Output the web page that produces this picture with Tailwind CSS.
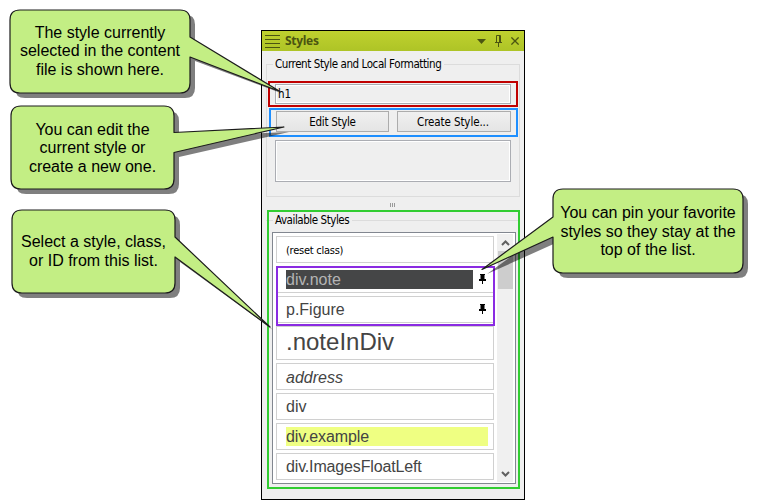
<!DOCTYPE html>
<html lang="en">
<head>
<meta charset="utf-8">
<title>Styles window pane</title>
<script src="https://cdn.jsdelivr.net/npm/@tailwindcss/browser@4"></script>
</head>
<body class="bg-white">
<div class="relative w-[758px] h-[500px] overflow-hidden pl-[261px] pt-[30px]">

  <!-- Styles pane -->
  <main class="w-[264px] h-[470px] border border-black bg-[#efefef] flex flex-col text-[11.5px] leading-[14px] text-black font-['DejaVu_Sans_Condensed','DejaVu_Sans',sans-serif]">
    <header class="h-[20px] shrink-0 flex items-center bg-linear-to-b from-[#bfd12f] to-[#aec426] pl-[3px] pr-[5px] text-[#4b5511]">
      <svg class="w-[15px] h-[13px]" viewBox="0 0 15 13" stroke="#4b5511" stroke-width="1"><path d="M0 .5h15M0 4.500h15M0 8.500h15M0 12.500h15"/></svg>
      <span class="ml-[5px] text-[12px] font-bold tracking-[-0.3px] font-['Open_Sans',sans-serif]">Styles</span>
      <svg class="ml-auto w-[9px] h-[5px]" viewBox="0 0 9 5" fill="#4b5511"><path d="M0 0h9L4.500 5z"/></svg>
      <svg class="ml-[9px] w-[7px] h-[12px]" viewBox="0 0 7 12" fill="none" stroke="#4b5511"><path d="M1.500 7V.5h4V7M4.500 .5V7M0 7.500h7M3.500 8v4"/></svg>
      <svg class="ml-[9px] w-[8px] h-[8px]" viewBox="0 0 8 8" fill="none" stroke="#4b5511" stroke-width="1.300"><path d="M.4 .4l7.200 7.200M7.600 .4L.4 7.600"/></svg>
    </header>

    <section class="mt-[6px] mx-[4px] h-[140px] shrink-0 flex flex-col">
      <div class="flex items-center h-[14px]">
        <span class="w-[7px] h-px bg-[#dcdcdc]"></span>
        <h2 class="pl-[2px] w-[171px] whitespace-nowrap tracking-[-0.42px]">Current Style and Local Formatting</h2>
        <span class="flex-1 h-px bg-[#dcdcdc]"></span>
      </div>
      <div class="-mt-[7px] h-[133px] border border-t-0 border-[#dcdcdc] px-[8px] pt-[20px] flex flex-col">
        <div class="h-[20px] border border-[#abadb3] ring-1 ring-inset ring-white pl-[2px] flex items-center">h1</div>
        <div class="mt-[7px] ml-px flex gap-[8px] w-[235px]">
          <button class="w-[113px] h-[21px] border border-[#acacac] bg-linear-to-b from-[#f0f0f0] to-[#e5e5e5] tracking-[-0.3px]">Edit Style</button>
          <button class="w-[114px] h-[21px] pr-[2px] border border-[#acacac] bg-linear-to-b from-[#f0f0f0] to-[#e5e5e5] tracking-[-0.1px]">Create Style...</button>
        </div>
        <div class="mt-[8px] h-[42px] border border-[#abadb3] ring-1 ring-inset ring-white"></div>
      </div>
    </section>

    <div class="h-[16px] shrink-0 flex justify-center items-center gap-px pr-[2px]"><i class="w-px h-[4px] bg-[#999]"></i><i class="w-px h-[4px] bg-[#999]"></i><i class="w-px h-[4px] bg-[#999]"></i></div>

    <section class="mx-[4px] h-[277px] shrink-0 flex flex-col">
      <div class="flex items-center h-[14px]">
        <span class="w-[7px] h-px bg-[#dcdcdc]"></span>
        <h2 class="pl-[2px] w-[79px] whitespace-nowrap tracking-[-0.45px]">Available Styles</h2>
        <span class="flex-1 h-px bg-[#dcdcdc]"></span>
      </div>
      <div class="mt-[5px] ml-[6px] w-[244px] h-[252px] border border-[#828790] bg-white flex">
        <ul class="pl-[3px] pt-[3px] w-[222px] flex flex-col gap-[3px] text-[16px] leading-[19px] text-[#444] font-['Liberation_Sans',sans-serif]">
          <li class="w-[218px] h-[27px] border border-[#d0d0d0] px-[9px] pt-px flex items-center text-[11px] text-black font-['DejaVu_Sans_Condensed',sans-serif] tracking-[-0.25px]">(reset class)</li>
          <li class="w-[218px] h-[27px] border border-[#d0d0d0] pl-[9px] pr-[6px] flex items-center"><span class="w-[187px] h-[19px] bg-[#454647] text-[#b4b4b4]">div.note</span>
            <svg class="ml-auto mb-[2px] w-[9px] h-[10px]" viewBox="0 0 9 10" fill="#000"><path d="M2 0h5v1H6.500v4H8v2H5v3H4V7H1V5h1.500V1H2z"/></svg></li>
          <li class="w-[218px] h-[27px] border border-[#d0d0d0] pl-[9px] pr-[6px] flex items-center"><span>p.Figure</span>
            <svg class="ml-auto mb-[2px] w-[9px] h-[10px]" viewBox="0 0 9 10" fill="#000"><path d="M2 0h5v1H6.500v4H8v2H5v3H4V7H1V5h1.500V1H2z"/></svg></li>
          <li class="w-[218px] h-[34px] border border-[#d0d0d0] px-[9px] text-[24px] leading-[30px]">.noteInDiv</li>
          <li class="w-[218px] h-[27px] border border-[#d0d0d0] px-[9px] pt-px flex items-center italic">address</li>
          <li class="w-[218px] h-[27px] border border-[#d0d0d0] px-[9px] flex items-center">div</li>
          <li class="w-[218px] h-[27px] border border-[#d0d0d0] px-[9px] flex items-center"><span class="w-[202px] shrink-0 h-[19px] bg-[#efff82] tracking-[-0.1px]">div.example</span></li>
          <li class="w-[218px] h-[27px] border border-[#d0d0d0] px-[9px] flex items-center tracking-[-0.15px]">div.ImagesFloatLeft</li>
        </ul>
        <div class="ml-[2px] my-px w-[16px] bg-[#f0f0f0] flex flex-col items-center">
          <svg class="h-[17px] w-[15px] shrink-0" viewBox="0 0 15 17" fill="none" stroke="#606060" stroke-width="2"><path d="M4 11l3.500-3.500L11 11"/></svg>
          <div class="w-[15px] h-[38px] bg-[#cdcdcd]"></div>
          <svg class="mt-auto h-[17px] w-[15px] shrink-0" viewBox="0 0 15 17" fill="none" stroke="#606060" stroke-width="2"><path d="M4 7l3.500 3.500L11 7"/></svg>
        </div>
      </div>
    </section>
  </main>

  <!-- Highlight frames over the pane -->
  <div class="absolute left-[268px] top-[81px] w-[250px] h-[26px] border-2 border-[#c00000]"></div>
  <div class="absolute left-[269px] top-[108px] w-[249px] h-[29px] border-2 border-[#1e8fff]"></div>
  <div class="absolute left-[267px] top-[210px] w-[253px] h-[279px] border-2 border-[#32cd32]"></div>
  <div class="absolute left-[276px] top-[266px] w-[219px] h-[60px] border-2 border-[#8a2be2]"></div>

  <!-- Callout bubbles -->
  <svg class="absolute inset-0 w-[758px] h-[500px]" viewBox="0 0 758 500">
    <g fill="#000" fill-opacity=".5">
      <path d="M25 14.500H185Q195 14.500 195 24.500V42L281 93L195 61V88Q195 98 185 98H25Q15 98 15 88V25Q15 14.500 25 14.500Z"/>
      <path d="M26 111H169Q179 111 179 121V137L289 132L179 157V184Q179 194 169 194H26Q16 194 16 184V121Q16 111 26 111Z"/>
      <path d="M27 215H170Q180 215 180 225V242L273 330L180 262V288Q180 298 170 298H27Q17 298 17 288V225Q17 215 27 215Z"/>
      <path d="M568 194H738Q748 194 748 204V268Q748 278 738 278H568Q558 278 558 268V242L487 274L558 222V204Q558 194 568 194Z"/>
    </g>
    <g fill="#c3ee84" stroke="#1c1c1c" stroke-width="1.200" stroke-linejoin="round">
      <path d="M20 10H180Q190 10 190 20V37L280 91.500L190 57V83Q190 93 180 93H20Q10 93 10 83V20Q10 10 20 10Z"/>
      <path d="M21 106H164Q174 106 174 116V132.500L284 127L174 152.500V179Q174 189 164 189H21Q11 189 11 179V116Q11 106 21 106Z"/>
      <path d="M22 210H165Q175 210 175 220V237L270 327L175 257V283Q175 293 165 293H22Q12 293 12 283V220Q12 210 22 210Z"/>
      <path d="M563 189H733Q743 189 743 199V263Q743 273 733 273H563Q553 273 553 263V237L482 269.500L553 217V199Q553 189 563 189Z"/>
    </g>
  </svg>
  <div class="absolute left-[10px] top-[10px] w-[180px] h-[83px] flex items-center justify-center text-center whitespace-nowrap text-[16px] leading-[18.500px] text-black font-['Liberation_Sans',sans-serif]">The style currently<br>selected in the content<br>file is shown here.</div>
  <div class="absolute left-[11px] top-[107px] w-[163px] h-[83px] flex items-center justify-center text-center whitespace-nowrap text-[16px] leading-[18.500px] text-black font-['Liberation_Sans',sans-serif]">You can edit the<br>current style or<br>create a new one.</div>
  <div class="absolute left-[12px] top-[210px] w-[163px] h-[83px] flex items-center justify-center text-center whitespace-nowrap text-[16px] leading-[18.500px] text-black font-['Liberation_Sans',sans-serif]">Select a style, class,<br>or ID from this list.</div>
  <div class="absolute left-[553px] top-[190px] w-[190px] h-[84px] flex items-center justify-center text-center whitespace-nowrap text-[16px] leading-[18.500px] text-black font-['Liberation_Sans',sans-serif]">You can pin your favorite<br>styles so they stay at the<br>top of the list.</div>
</div>
</body>
</html>
